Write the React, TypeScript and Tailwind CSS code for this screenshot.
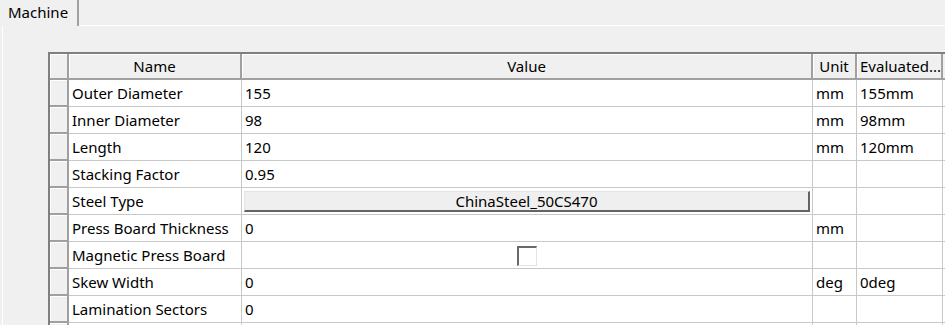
import React from "react";

type Row = {
  name: string;
  value?: string;
  unit?: string;
  evaluated?: string;
  kind?: "text" | "button" | "check";
};

const rows: Row[] = [
  { name: "Outer Diameter", value: "155", unit: "mm", evaluated: "155mm" },
  { name: "Inner Diameter", value: "98", unit: "mm", evaluated: "98mm" },
  { name: "Length", value: "120", unit: "mm", evaluated: "120mm" },
  { name: "Stacking Factor", value: "0.95" },
  { name: "Steel Type", value: "ChinaSteel_50CS470", kind: "button" },
  { name: "Press Board Thickness", value: "0", unit: "mm" },
  { name: "Magnetic Press Board", kind: "check" },
  { name: "Skew Width", value: "0", unit: "deg", evaluated: "0deg" },
  { name: "Lamination Sectors", value: "0" },
  { name: "", value: "" },
];

const HeaderCell = ({ w, children }: { w: string; children?: React.ReactNode }) => (
  <div
    className={`${w} shrink-0 h-full flex items-center justify-center bg-[#f0f0f0] border-r-2 border-b-2 border-[#a0a0a0] shadow-[inset_1px_1px_0_#ffffff]`}
  >
    {children}
  </div>
);

const Cell = ({ w, children }: { w: string; children?: React.ReactNode }) => (
  <div className={`${w} shrink-0 h-full flex items-center pl-[3px] bg-white border-r border-b border-[#c8c8c8] whitespace-nowrap overflow-hidden`}>
    {children}
  </div>
);

export default function App() {
  return (
    <div
      className="w-[945px] h-[325px] overflow-hidden bg-[#f0f0f0] text-[15px] text-black"
      style={{ fontFamily: '"Noto Sans", "Open Sans", sans-serif' }}
    >
      {/* tab bar */}
      <div className="flex h-[26px]">
        <div className="w-[79px] h-full pl-[8px] flex items-center border-r-2 border-[#a0a0a0] leading-none pb-[2px]">
          Machine
        </div>
        <div className="flex-1 h-full border-b border-white" />
      </div>

      {/* page */}
      <div className="flex h-[299px]">
        <div className="w-[2px] shrink-0" />
        <div className="w-[1px] shrink-0 bg-white" />
        <div className="flex-1 pt-[26px] pl-[45px] overflow-hidden">
          <div className="w-[1000px] border-l-2 border-t-2 border-[#7f7f7f] bg-white">
            {/* header */}
            <div className="flex h-[26px]">
              <HeaderCell w="w-[19px]" />
              <HeaderCell w="w-[173px]">Name</HeaderCell>
              <HeaderCell w="w-[571px]">Value</HeaderCell>
              <HeaderCell w="w-[44px]">Unit</HeaderCell>
              <div className="w-[86px] shrink-0 h-full flex items-center pl-[3px] bg-[#f0f0f0] border-r-2 border-b-2 border-[#a0a0a0] shadow-[inset_1px_1px_0_#ffffff] whitespace-nowrap">
                Evaluated...
              </div>
              <div className="flex-1 h-full bg-[#f0f0f0] border-b-2 border-[#a0a0a0]" />
            </div>
            {rows.map((r, i) => (
              <div key={i} className="flex h-[27px]">
                <div className="w-[19px] shrink-0 h-full bg-[#f0f0f0] border-r-2 border-b-2 border-[#a0a0a0] shadow-[inset_1px_1px_0_#ffffff]" />
                <Cell w="w-[173px]">{r.name}</Cell>
                {r.kind === "button" ? (
                  <div className="w-[571px] shrink-0 h-full bg-white border-r border-b border-[#c8c8c8] pl-[2px] pr-[2px] pt-[3px] pb-[2px]">
                    <div className="h-full flex items-center justify-center bg-[#efefef] border-t border-l border-[#e3e3e3] border-r-2 border-b-2 border-r-[#646464] border-b-[#646464]">
                      {r.value}
                    </div>
                  </div>
                ) : r.kind === "check" ? (
                  <div className="w-[571px] shrink-0 h-full flex items-center justify-center bg-white border-r border-b border-[#c8c8c8] pt-[2px]">
                    <div className="w-[20px] h-[20px] bg-white border-t-2 border-l-2 border-t-[#696969] border-l-[#696969] border-r border-b border-r-[#e3e3e3] border-b-[#e3e3e3]" />
                  </div>
                ) : (
                  <Cell w="w-[571px]">{r.value}</Cell>
                )}
                <Cell w="w-[44px]">{r.unit}</Cell>
                <Cell w="w-[86px]">{r.evaluated}</Cell>
                <div className="flex-1 h-full bg-white border-b border-[#c8c8c8]" />
              </div>
            ))}
          </div>
        </div>
      </div>
    </div>
  );
}
